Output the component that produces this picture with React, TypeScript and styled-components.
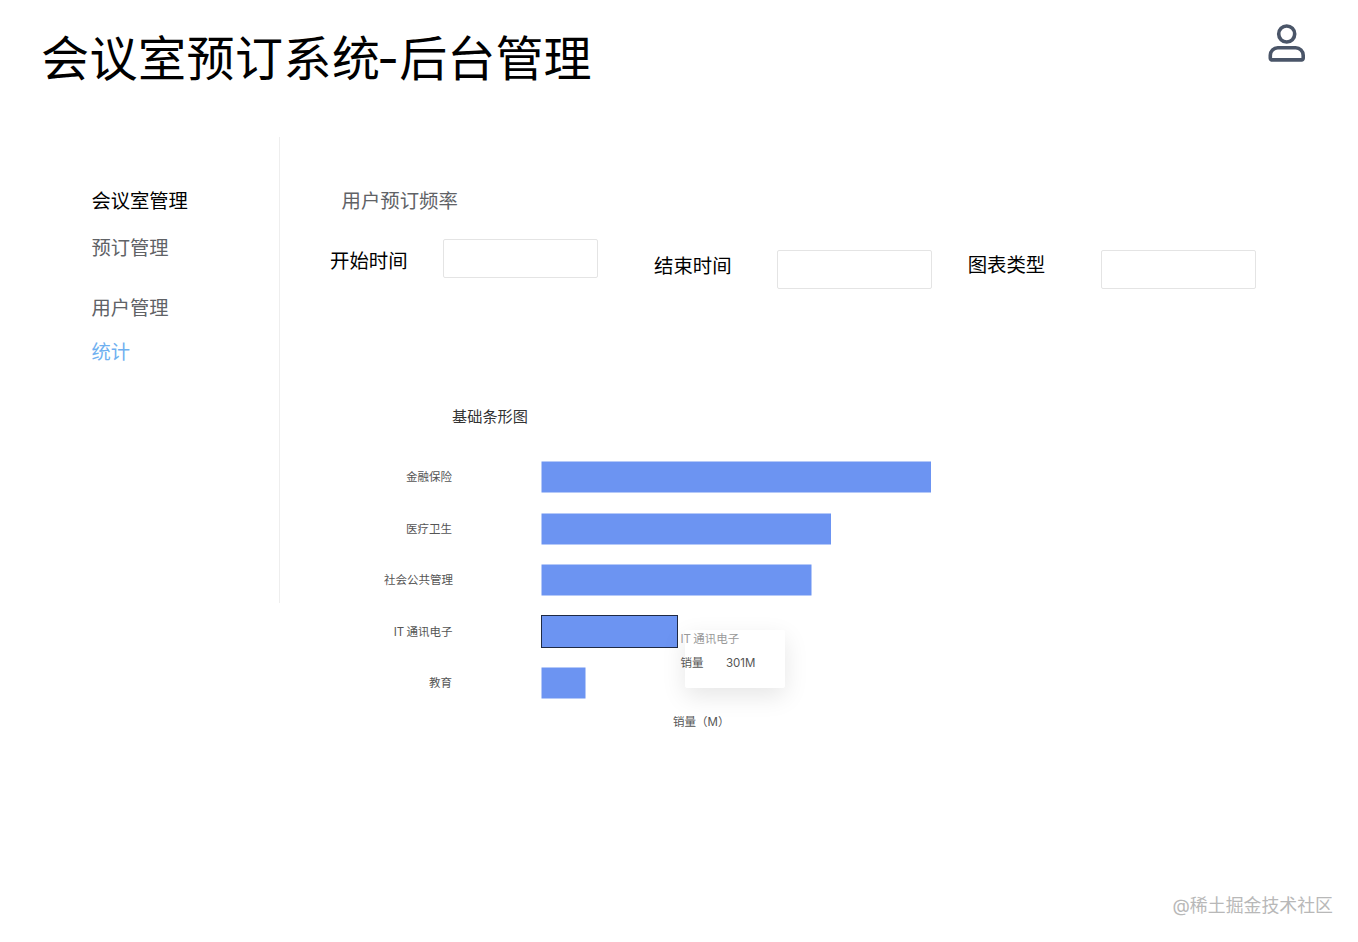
import React from "react";
import styled, { createGlobalStyle } from "styled-components";

const Global = createGlobalStyle`
  html, body { margin: 0; padding: 0; background: #fff; }
  body { font-family: Inter, "Noto Sans CJK SC", sans-serif; }
`;
const Page = styled.div`
  position: relative;
  width: 1358px;
  height: 942px;
  overflow: hidden;
`;
const Header = styled.header`
  display: flex;
  justify-content: space-between;
  align-items: flex-start;
  height: 137px;
  padding: 23px 50px 0 41px;
  box-sizing: border-box;
`;
const Title = styled.h1`
  margin: 0;
  font-size: 48px;
  line-height: 72px;
  font-weight: 400;
  color: #000;
  letter-spacing: 0.1px;
`;
const TitleLead = styled.span`
  letter-spacing: 0.5px;
  margin-right: -3.5px;
`;
const UserIcon = styled.svg`
  width: 44px;
  height: 44px;
  margin-top: -1px;
  color: #4a5568;
`;
const Body = styled.div`
  display: flex;
  align-items: flex-start;
`;
const Sidebar = styled.nav`
  width: 280px;
  height: 466px;
  box-sizing: border-box;
  border-right: 1px solid #eeeeee;
  padding: 49px 0 0 91.5px;
  display: flex;
  flex-direction: column;
`;
const MenuItem = styled.a<{ $color: string; $h: number }>`
  display: block;
  height: ${(p) => p.$h}px;
  font-size: 19.3px;
  line-height: 30px;
  font-weight: 400;
  color: ${(p) => p.$color};
`;
const Main = styled.main`
  flex: 1;
  display: flex;
  flex-direction: column;
  padding-top: 49px;
`;
const SectionTitle = styled.h2`
  margin: 0 0 0 61.5px;
  font-size: 19.4px;
  line-height: 30px;
  font-weight: 400;
  color: #606266;
`;
const FormRow = styled.div`
  display: flex;
  align-items: flex-start;
  margin-top: 23px;
  height: 51px;
`;
const Field = styled.div<{ $left: number; $top: number; $gap: number; $labelTop: number }>`
  display: flex;
  align-items: flex-start;
  gap: ${(p) => p.$gap}px;
  margin-left: ${(p) => p.$left}px;
  margin-top: ${(p) => p.$top}px;
  & > span {
    margin-top: ${(p) => p.$labelTop}px;
  }
`;
const Label = styled.span`
  font-size: 19.4px;
  line-height: 30px;
  color: #000;
  white-space: nowrap;
`;
const Input = styled.input`
  width: 155.5px;
  height: 39px;
  box-sizing: border-box;
  border: 1px solid #e4e4e4;
  border-radius: 2px;
  background: #fff;
  outline: none;
  padding: 0;
`;
const ChartWrap = styled.div`
  position: relative;
  margin: 110px 0 0 40px;
  width: 660px;
  height: 350px;
`;
const ChartSvg = styled.svg`
  display: block;
  font-family: Inter, "Noto Sans CJK SC", sans-serif;
`;
const Tooltip = styled.div`
  position: absolute;
  left: 365px;
  top: 230px;
  width: 100px;
  height: 58px;
  background: #fff;
  border-radius: 2px;
  box-shadow: 0 8px 24px rgba(0, 0, 0, 0.1);
`;
const TipTitle = styled.div`
  position: absolute;
  left: -4.500px;
  top: 0;
  font-size: 11.5px;
  line-height: 18px;
  word-spacing: -1px;
  color: #999;
  white-space: nowrap;
`;
const TipRow = styled.div`
  position: absolute;
  left: -4.500px;
  top: 24px;
  display: flex;
  gap: 22.500px;
  font-size: 11.5px;
  line-height: 18px;
  color: #555;
  white-space: nowrap;
`;
const Watermark = styled.div`
  position: absolute;
  right: 25px;
  bottom: 22px;
  font-size: 17.9px;
  line-height: 28px;
  color: #b8b8b8;
  white-space: nowrap;
`;

const bars = [
  { name: "金融保险", y: 61, w: 389.5, end: 452 },
  { name: "医疗卫生", y: 113, w: 289.5, end: 452 },
  { name: "社会公共管理", y: 164, w: 270, end: 453 },
  { name: "IT 通讯电子", y: 216, w: 136, end: 452.5, active: true },
  { name: "教育", y: 267, w: 44, end: 452 },
];
const originX = 320;

export default function App() {
  return (
    <Page>
      <Global />
      <Header>
        <Title>
          <TitleLead>会议室预订系统</TitleLead>-后台管理
        </Title>
        <UserIcon viewBox="0 0 44 44" fill="none" stroke="currentColor" strokeWidth="3.6">
          <circle cx="22.700" cy="12" r="8" />
          <path d="M13.800 25.800H31.700a7.500 7.500 0 0 1 7.500 7.500v3a1.600 1.600 0 0 1-1.600 1.600H7.900a1.600 1.600 0 0 1-1.600-1.600v-3a7.500 7.500 0 0 1 7.500-7.500Z" />
        </UserIcon>
      </Header>
      <Body>
        <Sidebar>
          <MenuItem $color="#000" $h={47}>会议室管理</MenuItem>
          <MenuItem $color="#606266" $h={60}>预订管理</MenuItem>
          <MenuItem $color="#606266" $h={44}>用户管理</MenuItem>
          <MenuItem $color="#6fb0f0" $h={30}>统计</MenuItem>
        </Sidebar>
        <Main>
          <SectionTitle>用户预订频率</SectionTitle>
          <FormRow>
            <Field $left={50} $top={0} $gap={35} $labelTop={7}>
              <Label>开始时间</Label>
              <Input readOnly />
            </Field>
            <Field $left={56} $top={11} $gap={45} $labelTop={1}>
              <Label>结束时间</Label>
              <Input readOnly />
            </Field>
            <Field $left={35.500} $top={11} $gap={55.500} $labelTop={0}>
              <Label>图表类型</Label>
              <Input readOnly />
            </Field>
          </FormRow>
          <ChartWrap>
            <ChartSvg width="660" height="350" viewBox="0 0 660 350">
              <text x={132} y={22} fontSize="15.200" fill="#333">基础条形图</text>
              {bars.map((b) => (
                <g key={b.name}>
                  <text
                    x={b.end - originX}
                    y={b.y + 19.500}
                    fontSize="11.500"
                    fill="#555"
                    textAnchor="end"
                    wordSpacing={b.active ? -1 : 0}
                  >
                    {b.name}
                  </text>
                  <rect
                    x={221.500}
                    y={b.active ? b.y - 0.500 : b.y + 0.500}
                    width={b.w}
                    height={b.active ? 32 : 31}
                    fill="#6c94f2"
                    stroke={b.active ? "#1f2a44" : "none"}
                    strokeWidth={1}
                  />
                </g>
              ))}
              <text x={353} y={326} fontSize="11.500" fill="#555">销量（M）</text>
            </ChartSvg>
            <Tooltip>
              <TipTitle>IT 通讯电子</TipTitle>
              <TipRow>
                <span>销量</span>
                <span>301M</span>
              </TipRow>
            </Tooltip>
          </ChartWrap>
        </Main>
      </Body>
      <Watermark>@稀土掘金技术社区</Watermark>
    </Page>
  );
}
